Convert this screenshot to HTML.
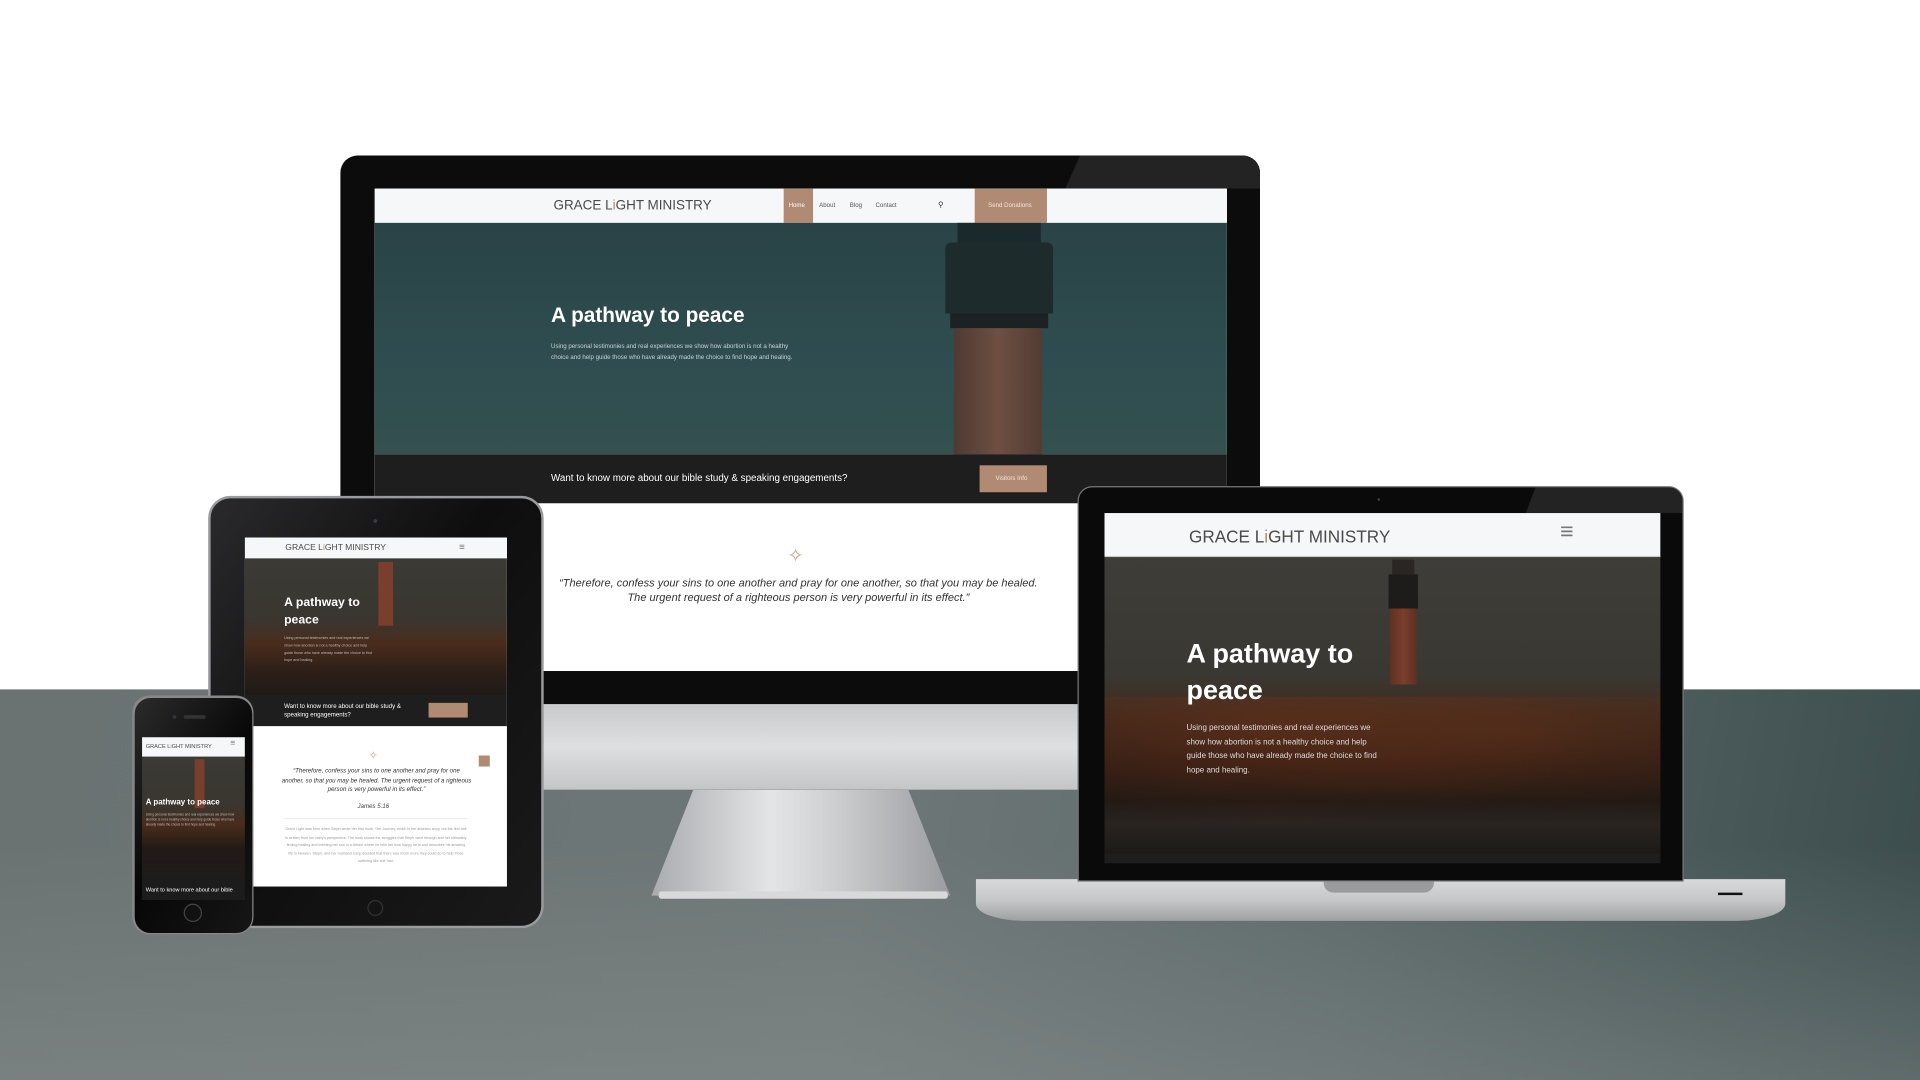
<!DOCTYPE html>
<html><head><meta charset="utf-8"><style>
*{margin:0;padding:0;box-sizing:border-box}
html,body{width:1920px;height:1080px;overflow:hidden;background:#fff;font-family:"Liberation Sans",sans-serif}
#w{position:absolute;left:0;top:0;width:1568px;height:882px;transform:scale(1.22449);transform-origin:0 0;overflow:hidden}
.a{position:absolute}
.floor{left:0;top:563px;width:1568px;height:319px;background:linear-gradient(100deg,#6a7272 0%,#6e7777 45%,#5b6868 70%,#3b4c4d 100%)}
.floor2{left:0;top:563px;width:1568px;height:319px;background:linear-gradient(180deg,rgba(0,0,0,0) 40%,rgba(140,145,145,.45) 100%)}
.logo{color:#4a4a4a;letter-spacing:0}
.logo b{color:#b0866b;font-weight:400}
.nav{background:#f6f7f8}
.tan{background:#b08a72}
</style></head><body><div id="w">
<div class="a floor"></div><div class="a floor2"></div>

<!-- iMac -->
<div class="a" style="left:532px;top:645px;width:244px;height:90px;background:linear-gradient(90deg,#a9abae,#e4e5e7 40%,#cfd0d2 60%,#9a9c9f);clip-path:polygon(14% 0,86% 0,100% 96%,0 96%)"></div>
<div class="a" style="left:538px;top:728px;width:236px;height:6px;background:#d8d9db;border-radius:2px"></div>
<div class="a" style="left:278px;top:127px;width:751px;height:518px;background:#0c0c0c;border-radius:14px 14px 0 0;overflow:hidden">
  <div class="a" style="left:592px;top:0;width:160px;height:27px;background:#232323;clip-path:polygon(12px 0,100% 0,100% 100%,0 100%)"></div>
</div>
<div class="a" style="left:278px;top:575px;width:751px;height:70px;background:linear-gradient(180deg,#c9cacc,#dedfe1 50%,#c4c5c7)"></div>
<div class="a" style="left:306px;top:154px;width:696px;height:394px;overflow:hidden;background:#fff">
  <div class="a nav" style="left:0;top:0;width:696px;height:28px"></div>
  <div class="a logo" style="left:146px;top:8px;font-size:11px">GRACE L<b>i</b>GHT MINISTRY</div>
  <div class="a tan" style="left:334px;top:0;width:24px;height:28px"></div>
  <div class="a" style="left:338px;top:11px;font-size:5px;color:#fff">Home</div>
  <div class="a" style="left:363px;top:11px;font-size:5px;color:#555">About</div>
  <div class="a" style="left:388px;top:11px;font-size:5px;color:#555">Blog</div>
  <div class="a" style="left:409px;top:11px;font-size:5px;color:#555">Contact</div>
  <div class="a" style="left:460px;top:10px;font-size:6px;color:#333">&#9906;</div>
  <div class="a tan" style="left:490px;top:0;width:59px;height:28px"></div>
  <div class="a" style="left:501px;top:11px;font-size:5px;color:#f2e6dc">Send Donations</div>
  <div class="a" style="left:0;top:28px;width:696px;height:189px;background:linear-gradient(180deg,#294346,#2f4d50 60%,#34504f)"></div>
  <div class="a" style="left:476px;top:28px;width:68px;height:18px;background:#1a2a2c"></div>
  <div class="a" style="left:466px;top:44px;width:88px;height:58px;background:#1e2b2c;border-radius:5px 5px 0 0"></div>
  <div class="a" style="left:470px;top:102px;width:80px;height:12px;background:#1c2223"></div>
  <div class="a" style="left:473px;top:114px;width:72px;height:103px;background:linear-gradient(90deg,#4e3a32,#6e4f42 50%,#523c33)"></div>
  <div class="a" style="left:144px;top:94px;font-size:17px;font-weight:700;color:#fff">A pathway to peace</div>
  <div class="a" style="left:144px;top:125px;width:200px;font-size:5px;line-height:9px;color:#c9d2d2">Using personal testimonies and real experiences we show how abortion is not a healthy choice and help guide those who have already made the choice to find hope and healing.</div>
  <div class="a" style="left:0;top:217px;width:696px;height:40px;background:#1e1e1e"></div>
  <div class="a" style="left:144px;top:232px;font-size:8px;color:#fff">Want to know more about our bible study &amp; speaking engagements?</div>
  <div class="a tan" style="left:494px;top:226px;width:55px;height:22px"></div>
  <div class="a" style="left:507px;top:234px;font-size:5px;color:#f2e6dc">Visitors Info</div>
  <div class="a" style="left:337px;top:290px;font-size:16px;color:#c9a28a">&#10023;</div>
  <div class="a" style="left:96px;top:316px;width:500px;text-align:center;font-size:9px;line-height:12px;font-style:italic;color:#333">“Therefore, confess your sins to one another and pray for one another, so that you may be healed.<br>The urgent request of a righteous person is very powerful in its effect.”</div>
</div>

<!-- Tablet -->
<div class="a" style="left:170px;top:405px;width:274px;height:353px;border-radius:18px;background:#9a9b9d;padding:2px">
  <div style="width:100%;height:100%;border-radius:16px;background:linear-gradient(125deg,#2a2a2c,#0e0e0e 45%,#1a1a1a)"></div>
</div>
<div class="a" style="left:305px;top:424px;width:3px;height:3px;border-radius:50%;background:#3a3a55"></div>
<div class="a" style="left:300px;top:735px;width:13px;height:13px;border-radius:50%;border:1px solid #333"></div>
<div class="a" style="left:200px;top:439px;width:214px;height:285px;overflow:hidden;background:#fff">
  <div class="a nav" style="left:0;top:0;width:214px;height:17px"></div>
  <div class="a logo" style="left:33px;top:5px;font-size:7px">GRACE L<b>i</b>GHT MINISTRY</div>
  <div class="a" style="left:175px;top:3px;font-size:8px;color:#777">&#8801;</div>
  <div class="a" style="left:0;top:17px;width:214px;height:112px;background:linear-gradient(180deg,#3b3a35,#3a362f 45%,#4a2c1d 62%,#2e1f18 82%,#1d1a18)"></div>
  <div class="a" style="left:109px;top:20px;width:12px;height:52px;background:#7a3e2c"></div>
  <div class="a" style="left:32px;top:47px;font-size:10px;font-weight:700;line-height:14px;color:#fff">A pathway to<br>peace</div>
  <div class="a" style="left:32px;top:79px;width:76px;font-size:3px;line-height:6px;color:#bbb">Using personal testimonies and real experiences we show how abortion is not a healthy choice and help guide those who have already made the choice to find hope and healing.</div>
  <div class="a" style="left:0;top:129px;width:214px;height:25px;background:#1e1e1e"></div>
  <div class="a tan" style="left:150px;top:135px;width:32px;height:12px"></div>
  <div class="a" style="left:32px;top:135px;width:115px;font-size:5px;line-height:7px;color:#fff">Want to know more about our bible study &amp; speaking engagements?</div>
  <div class="a" style="left:101px;top:173px;font-size:9px;color:#c9a28a">&#10023;</div>
  <div class="a tan" style="left:191px;top:178px;width:9px;height:9px"></div>
  <div class="a" style="left:30px;top:188px;width:155px;text-align:center;font-size:5px;line-height:7.5px;font-style:italic;color:#333">“Therefore, confess your sins to one another and pray for one another, so that you may be healed. The urgent request of a righteous person is very powerful in its effect.”</div>
  <div class="a" style="left:92px;top:217px;font-size:5px;font-style:italic;color:#444">James 5:16</div>
  <div class="a" style="left:32px;top:229px;width:150px;height:1px;background:#eee"></div>
  <div class="a" style="left:32px;top:235px;width:150px;text-align:center;font-size:3px;line-height:6.5px;color:#999">Grace Light was born when Steph wrote her first book, The Journey, which is her abortion story, but the first half is written from her baby's perspective. The book shows the struggles that Steph went through and her ultimately finding healing and meeting her son in a dream where he tells her how happy he is and describes his amazing life in Heaven. Steph, and her husband Cary, decided that there was much more they could do to help those suffering like she had.</div>
</div>

<!-- Phone -->
<div class="a" style="left:108px;top:568px;width:99px;height:195px;border-radius:14px;background:#888;padding:1.5px">
  <div style="width:100%;height:100%;border-radius:13px;background:linear-gradient(125deg,#2b2b2b,#070707 50%,#161616)"></div>
</div>
<div class="a" style="left:141px;top:584px;width:3px;height:3px;border-radius:50%;background:#334"></div>
<div class="a" style="left:150px;top:584px;width:18px;height:3px;border-radius:2px;background:#333"></div>
<div class="a" style="left:150px;top:738px;width:15px;height:15px;border-radius:50%;border:1px solid #444;background:#111"></div>
<div class="a" style="left:116px;top:602px;width:84px;height:133px;overflow:hidden;background:#1c1c1c">
  <div class="a nav" style="left:0;top:0;width:84px;height:16px"></div>
  <div class="a logo" style="left:3px;top:5px;font-size:4.6px">GRACE L<b>i</b>GHT MINISTRY</div>
  <div class="a" style="left:72px;top:2px;font-size:7px;color:#777">&#8801;</div>
  <div class="a" style="left:0;top:16px;width:84px;height:100px;background:linear-gradient(180deg,#3b3a35,#3a362f 40%,#4a2c1d 55%,#231a15 75%,#1d1b1a)"></div>
  <div class="a" style="left:43px;top:18px;width:8px;height:40px;background:#7a3e2c"></div>
  <div class="a" style="left:3px;top:50px;font-size:6.5px;font-weight:700;color:#fff">A pathway to peace</div>
  <div class="a" style="left:3px;top:62px;width:76px;font-size:2.6px;line-height:4px;color:#bbb">Using personal testimonies and real experiences we show how abortion is not a healthy choice and help guide those who have already made the choice to find hope and healing.</div>
  <div class="a" style="left:3px;top:122px;font-size:4.6px;color:#fff">Want to know more about our bible</div>
</div>

<!-- Laptop -->
<div class="a" style="left:797px;top:718px;width:661px;height:34px;border-radius:0 0 40px 40px/0 0 14px 14px;background:linear-gradient(180deg,#d8d9db,#c6c7c9 50%,#9fa0a3)"></div>
<div class="a" style="left:1081px;top:720px;width:90px;height:9px;border-radius:0 0 8px 8px;background:#9a9b9e"></div>
<div class="a" style="left:1403px;top:729px;width:20px;height:2px;background:#111"></div>
<div class="a" style="left:880px;top:397px;width:495px;height:323px;border-radius:12px 12px 0 0;background:#0a0a0a;border:1px solid #777;overflow:hidden">
  <div class="a" style="left:365px;top:0;width:130px;height:21px;background:#232323;clip-path:polygon(8px 0,100% 0,100% 100%,0 100%)"></div>
</div>
<div class="a" style="left:1125px;top:407px;width:2px;height:2px;background:#444;border-radius:50%"></div>
<div class="a" style="left:902px;top:419px;width:454px;height:286px;overflow:hidden;background:#1e1e1e">
  <div class="a nav" style="left:0;top:0;width:454px;height:36px;border-bottom:1px solid #ccc"></div>
  <div class="a logo" style="left:69px;top:11px;font-size:14px">GRACE L<b>i</b>GHT MINISTRY</div>
  <div class="a" style="left:372px;top:5px;font-size:19px;color:#777">&#8801;</div>
  <div class="a" style="left:0;top:36px;width:454px;height:242px;background:linear-gradient(180deg,#3e3d38,#3a3832 40%,#3e2a1e 52%,#2e1c14 70%,#1f1814 82%,#2a2420 90%,#1c1a19)"></div>
  <div class="a" style="left:0;top:150px;width:454px;height:120px;background:radial-gradient(ellipse at 30% 20%,rgba(110,50,25,.5),transparent 60%),radial-gradient(ellipse at 75% 25%,rgba(100,50,25,.45),transparent 55%)"></div>
  <div class="a" style="left:235px;top:38px;width:18px;height:12px;background:#2a2624"></div>
  <div class="a" style="left:232px;top:50px;width:24px;height:28px;background:#1e1c1a"></div>
  <div class="a" style="left:233px;top:78px;width:22px;height:62px;background:linear-gradient(90deg,#5e3022,#7a3e2c 50%,#5e3022)"></div>
  <div class="a" style="left:67px;top:100px;font-size:22px;font-weight:700;line-height:30px;color:#fff">A pathway to<br>peace</div>
  <div class="a" style="left:67px;top:170px;width:160px;font-size:6.5px;line-height:11.5px;color:#ddd">Using personal testimonies and real experiences we show how abortion is not a healthy choice and help guide those who have already made the choice to find hope and healing.</div>
</div>
</div></body></html>
